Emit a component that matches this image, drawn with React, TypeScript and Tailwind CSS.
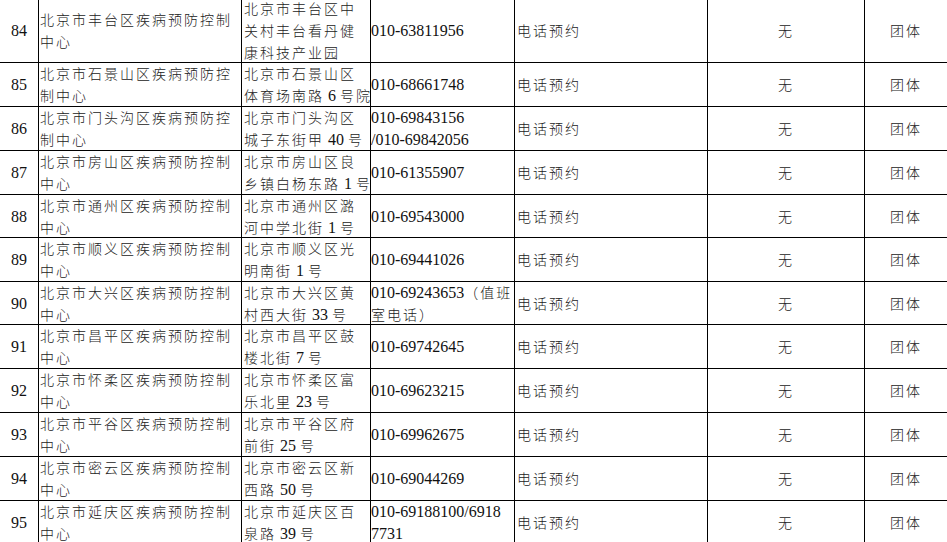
import React from "react";

type Row = {
  n: string;
  name: string[];
  addr: string[];
  phone: string[];
  h: string;
};

const rows: Row[] = [
  { n: "84", name: ["北京市丰台区疾病预防控制", "中心"], addr: ["北京市丰台区中", "关村丰台看丹健", "康科技产业园"], phone: ["010-63811956"], h: "h-[65px] -mt-[2px]" },
  { n: "85", name: ["北京市石景山区疾病预防控", "制中心"], addr: ["北京市石景山区", "体育场南路 6 号院"], phone: ["010-68661748"], h: "h-[44px]" },
  { n: "86", name: ["北京市门头沟区疾病预防控", "制中心"], addr: ["北京市门头沟区", "城子东街甲 40 号"], phone: ["010-69843156", "/010-69842056"], h: "h-[44px]" },
  { n: "87", name: ["北京市房山区疾病预防控制", "中心"], addr: ["北京市房山区良", "乡镇白杨东路 1 号"], phone: ["010-61355907"], h: "h-[44px]" },
  { n: "88", name: ["北京市通州区疾病预防控制", "中心"], addr: ["北京市通州区潞", "河中学北街 1 号"], phone: ["010-69543000"], h: "h-[43px]" },
  { n: "89", name: ["北京市顺义区疾病预防控制", "中心"], addr: ["北京市顺义区光", "明南街 1 号"], phone: ["010-69441026"], h: "h-[44px]" },
  { n: "90", name: ["北京市大兴区疾病预防控制", "中心"], addr: ["北京市大兴区黄", "村西大街 33 号"], phone: ["010-69243653（值班", "室电话）"], h: "h-[43px]" },
  { n: "91", name: ["北京市昌平区疾病预防控制", "中心"], addr: ["北京市昌平区鼓", "楼北街 7 号"], phone: ["010-69742645"], h: "h-[44px]" },
  { n: "92", name: ["北京市怀柔区疾病预防控制", "中心"], addr: ["北京市怀柔区富", "乐北里 23 号"], phone: ["010-69623215"], h: "h-[44px]" },
  { n: "93", name: ["北京市平谷区疾病预防控制", "中心"], addr: ["北京市平谷区府", "前街 25 号"], phone: ["010-69962675"], h: "h-[44px]" },
  { n: "94", name: ["北京市密云区疾病预防控制", "中心"], addr: ["北京市密云区新", "西路 50 号"], phone: ["010-69044269"], h: "h-[44px]" },
  { n: "95", name: ["北京市延庆区疾病预防控制", "中心"], addr: ["北京市延庆区百", "泉路 39 号"], phone: ["010-69188100/6918", "7731"], h: "h-[44px]" },
];

function Mixed({ text }: { text: string }) {
  const parts = text.split(/([\x00-\x7F]+)/).filter((p) => p.length > 0);
  return (
    <>
      {parts.map((p, i) =>
        /^[\x00-\x7F]+$/.test(p) ? (
          <span key={i} className="text-[16px] tracking-normal text-[#111]">
            {p}
          </span>
        ) : (
          <span key={i} className="text-[14px] font-light tracking-[2px] text-[#222]">
            {p}
          </span>
        )
      )}
    </>
  );
}

function Lines({ lines }: { lines: string[] }) {
  return (
    <div className="flex flex-col">
      {lines.map((l, i) => (
        <div key={i} className="whitespace-nowrap leading-[22px] h-[22px]">
          <Mixed text={l} />
        </div>
      ))}
    </div>
  );
}

export default function App() {
  return (
    <div
      className="w-[947px] h-[542px] overflow-hidden bg-white"
      style={{ fontFamily: '"Liberation Serif", "Noto Sans CJK SC", serif' }}
    >
      <div className="flex flex-col">
        {rows.map((r) => (
          <div
            key={r.n}
            className={`grid grid-cols-[39px_203px_129px_144px_193px_157px_1fr] border-b border-black ${r.h}`}
          >
            <div className="flex items-center justify-center border-r border-black text-[16px] text-[#111]">
              {r.n}
            </div>
            <div className="flex items-center border-r border-black pl-[1px]">
              <Lines lines={r.name} />
            </div>
            <div className="flex items-center border-r border-black pl-[2px]">
              <Lines lines={r.addr} />
            </div>
            <div className="flex items-center border-r border-black pl-0">
              <Lines lines={r.phone} />
            </div>
            <div className="flex items-center border-r border-black pl-[2px]">
              <Lines lines={["电话预约"]} />
            </div>
            <div className="flex items-center justify-center border-r border-black">
              <Lines lines={["无"]} />
            </div>
            <div className="flex items-center justify-center">
              <Lines lines={["团体"]} />
            </div>
          </div>
        ))}
      </div>
    </div>
  );
}
